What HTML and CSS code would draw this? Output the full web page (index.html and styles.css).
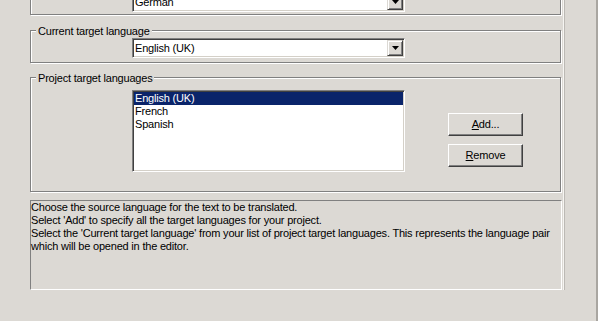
FILE: index.html
```html
<!DOCTYPE html>
<html lang="en">
<head>
  <meta charset="UTF-8">
  <title>Project languages</title>
  <link rel="stylesheet" href="styles.css">
</head>
<body>
  <div class="screen">
    <div class="main">
      <div class="group group-source">
        <div class="combo">
          <span class="combo-text">German</span>
          <span class="combo-btn"><svg width="7" height="4" viewBox="0 0 7 4"><polygon points="0,0 7,0 3.5,4" fill="#000"/></svg></span>
        </div>
      </div>

      <div class="group group-current">
        <div class="caption">Current target language</div>
        <div class="combo">
          <span class="combo-text">English (UK)</span>
          <span class="combo-btn"><svg width="7" height="4" viewBox="0 0 7 4"><polygon points="0,0 7,0 3.5,4" fill="#000"/></svg></span>
        </div>
      </div>

      <div class="group group-project">
        <div class="caption">Project target languages</div>
        <div class="project-row">
          <ul class="listbox">
            <li class="selected">English (UK)</li>
            <li>French</li>
            <li>Spanish</li>
          </ul>
          <div class="buttons">
            <button class="btn"><u>A</u>dd...</button>
            <button class="btn"><u>R</u>emove</button>
          </div>
        </div>
      </div>

      <div class="help">
        Choose the source language for the text to be translated.<br>
        Select 'Add' to specify all the target languages for your project.<br>
        Select the 'Current target language' from your list of project target languages. This represents the language pair<br>
        which will be opened in the editor.
      </div>
    </div>
    <div class="side"></div>
  </div>
</body>
</html>
```

FILE: styles.css
```css
* { box-sizing: border-box; }
body {
  margin: 0;
  background: #dcd9d4;
  font-family: "Liberation Sans", Arial, sans-serif;
  font-size: 11px;
  line-height: 13px;
  letter-spacing: -0.2px;
  color: #000;
  overflow: hidden;
}
.screen { display: flex; height: 321px; }
.main {
  width: 564px;
  height: 290px;
  padding-left: 30px;
  border-right: 1px solid #f6f5f2;
  box-shadow: 1px 0 0 #bcb9b4;
}
.side { flex: 1; border-right: 2px solid #a9a6a1; }

/* etched group boxes */
.group {
  width: 531px;
  border: 1px solid #808080;
  box-shadow: inset 1px 1px 0 #fff, 1px 1px 0 #fff;
}
.group-source { margin-top: -18px; height: 33px; }
.group-source .combo { margin-top: 9px; }
.group-current { margin-top: 15px; height: 33px; }
.group-project { margin-top: 14px; height: 115px; }
.caption {
  width: fit-content;
  margin: -6px 0 -7px 5px;
  padding: 0 2px;
  background: #dcd9d4;
}

/* sunken controls */
.combo, .listbox {
  width: 273px;
  background: #fff;
  border: 1px solid;
  border-color: #808080 #fff #fff #808080;
  box-shadow: inset 1px 1px 0 #404040, inset -1px -1px 0 #d4d0c8;
  padding: 1px;
}
.combo { display: flex; height: 20px; margin: 7px 0 0 101px; }
.combo-text { flex: 1; padding-left: 1px; line-height: 16px; }
.combo-btn {
  display: flex;
  align-items: center;
  justify-content: center;
  width: 16px;
  height: 16px;
  background: #dcd9d4;
  border: 1px solid;
  border-color: #dcd9d4 #404040 #404040 #dcd9d4;
  box-shadow: inset 1px 1px 0 #fff, inset -1px -1px 0 #808080;
}

.project-row { display: flex; margin: 12px 0 0 101px; }
.listbox { height: 82px; margin: 0; list-style: none; }
.listbox li { height: 13px; padding-left: 1px; }
.listbox .selected { background: #0a246a; color: #fff; }

.buttons { display: flex; flex-direction: column; gap: 8px; margin: 23px 0 0 43px; }
.btn {
  width: 75px;
  height: 23px;
  padding: 0;
  font: inherit;
  letter-spacing: inherit;
  color: #000;
  background: #dcd9d4;
  border: 1px solid;
  border-color: #fff #404040 #404040 #fff;
  box-shadow: inset -1px -1px 0 #808080;
}

.help {
  width: 532px;
  height: 90px;
  margin-top: 8px;
  border: 1px solid;
  border-color: #808080 #fff #fff #808080;
  white-space: nowrap;
}
```
